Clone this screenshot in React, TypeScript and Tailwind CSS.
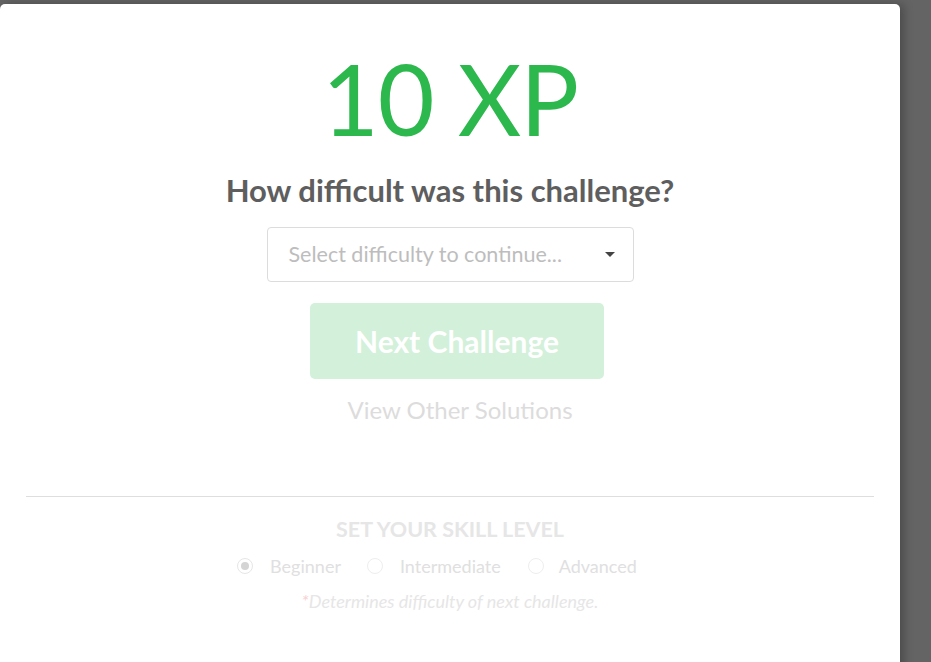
import React from "react";

export default function App() {
  const font = { fontFamily: "Lato, 'Noto Sans', sans-serif" };
  return (
    <div className="w-[931px] h-[662px] bg-[#646464] overflow-hidden relative" style={font}>
      <div className="absolute left-0 top-[4px] w-[900px] h-[700px] bg-white rounded-t-[5px] shadow-[4px_0_10px_rgba(0,0,0,0.25)] flex flex-col items-center">
        <div className="mt-[45px] text-[98px] leading-none text-[#2db84d] font-normal tracking-[-1px]">10 XP</div>
        <div className="mt-[28px] text-[31px] leading-none font-bold text-[#5e5e5e]">How difficult was this challenge?</div>
        <div className="mt-[21px] w-[367px] h-[55px] border border-[#dcdcdc] rounded-[4px] flex items-center justify-between pl-[21px] pr-[18px]">
          <span className="text-[21.5px] text-[#bdbdbd]">Select difficulty to continue...</span>
          <svg width="10" height="6" viewBox="0 0 10 6"><path d="M0 0 L10 0 L5 5 Z" fill="#444" /></svg>
        </div>
        <div className="mt-[21px] ml-[14px] w-[294px] h-[76px] rounded-[5px] bg-[#d3f0da] flex items-center justify-center text-white font-bold text-[30px]">Next Challenge</div>
        <div className="mt-[19px] ml-[20px] text-[24px] leading-none text-[#dcdcdc]">View Other Solutions</div>
        <div className="mt-[74px] w-[848px] h-px bg-[#dedede]" />
        <div className="mt-[22px] text-[21.5px] leading-none font-bold text-[#e6e6e6]">SET YOUR SKILL LEVEL</div>
        <div className="mt-[16px] mr-[26px] flex items-center text-[18px] leading-none text-[#e0e0e0]">
          <span className="w-[16px] h-[16px] rounded-full border border-[#e6e6e6] flex items-center justify-center">
            <span className="w-[8px] h-[8px] rounded-full bg-[#d4d4d4]" />
          </span>
          <span className="ml-[17px]">Beginner</span>
          <span className="ml-[26px] w-[16px] h-[16px] rounded-full border border-[#eeeeee]" />
          <span className="ml-[17px]">Intermediate</span>
          <span className="ml-[27px] w-[16px] h-[16px] rounded-full border border-[#eeeeee]" />
          <span className="ml-[15px]">Advanced</span>
        </div>
        <div className="mt-[17px] text-[18px] leading-none italic text-[#e6e6e6]"><span className="text-[#f7d0d0]">*</span>Determines difficulty of next challenge.</div>
      </div>
    </div>
  );
}
